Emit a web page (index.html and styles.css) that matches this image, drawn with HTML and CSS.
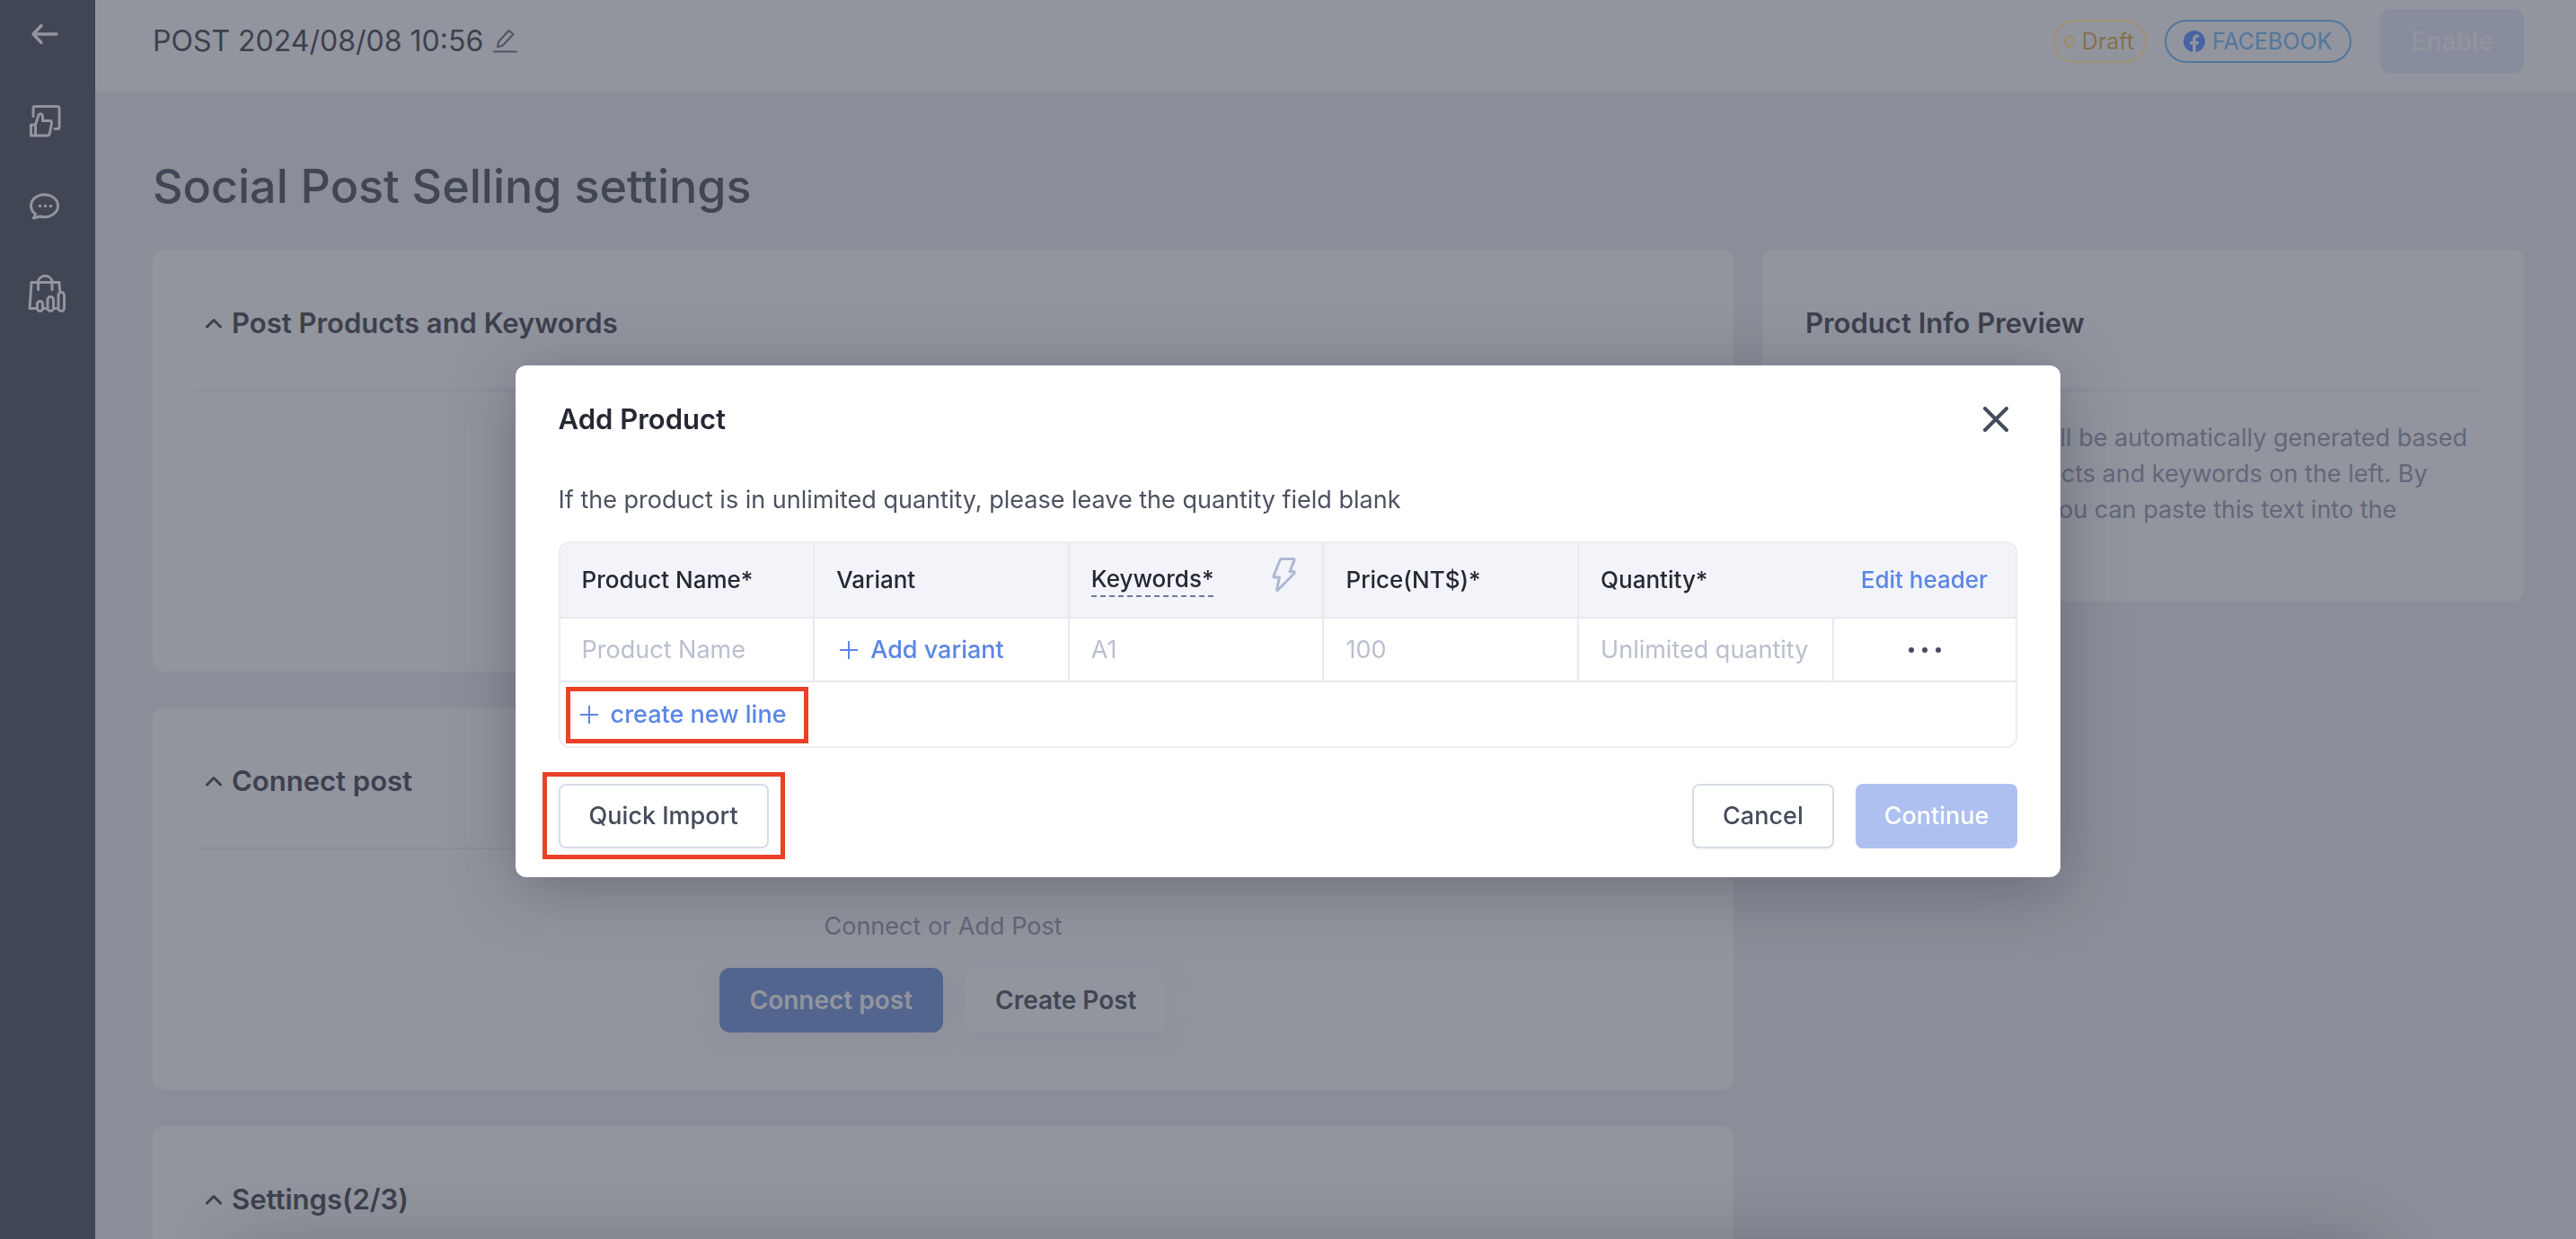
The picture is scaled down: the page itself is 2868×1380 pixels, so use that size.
FILE: index.html
```html
<!DOCTYPE html>
<html lang="en">
<head>
<meta charset="utf-8">
<title>Social Post Selling settings</title>
<link rel="stylesheet" href="styles.css">
</head>
<body>
<div class="app">
  <nav class="sidebar" aria-label="Main">
    <a href="#back" class="nav-item" aria-label="Back">
      <svg width="48" height="48" viewBox="0 0 48 48"><path d="M37 24H11M20 14.500L11 24l9 9.500" stroke-width="3.500"/></svg>
    </a>
    <a href="#posts" class="nav-item" aria-label="Posts">
      <svg width="48" height="48" viewBox="0 0 48 48"><path d="M11 19.500V10.500q0-2 2-2h25q2 0 2 2v21q0 2-2 2h-3M8.500 29h5v12h-5zM13.500 29l3-9.500q.500-3 3-2.500 2 .500 2 3.500v4H29q3 0 2.500 2.500l-2 11q-.500 3-3 3h-13"/></svg>
    </a>
    <a href="#messages" class="nav-item" aria-label="Messages">
      <svg width="48" height="48" viewBox="0 0 48 48"><path d="M13.500 32.500A15 12.500 0 1 1 18.500 35L11.500 37z"/><g class="solid"><circle cx="18.500" cy="23.500" r="1.800"/><circle cx="24.500" cy="23.500" r="1.800"/><circle cx="30.500" cy="23.500" r="1.800"/></g></svg>
    </a>
    <a href="#shop" class="nav-item" aria-label="Shop">
      <svg width="48" height="48" viewBox="0 0 48 48"><g stroke-width="3"><path d="M16.500 20.500V11a8 7.500 0 0 1 15.500 0v9.500M15 41.500H7L9 12.500h31l.500 9M22 41.500h4.500M34 41.500h4.500"/><rect x="15.500" y="33.500" width="6" height="11" rx="3"/><rect x="27" y="28.500" width="6.500" height="16" rx="3.200"/><rect x="39" y="23.500" width="6.500" height="21" rx="3.200"/></g></svg>
    </a>
  </nav>
  <div class="page">
    <header class="topbar">
      <div class="post-name">
        <span>POST 2024/08/08 10:56</span>
        <button class="icon-button" type="button" aria-label="Rename post">
          <svg width="28" height="28" viewBox="0 0 28 28"><path d="M2 25.500h25M6 20.500l1-6L18.500 2l5 4L12 18.500z" /></svg>
        </button>
      </div>
      <div class="status">
        <span class="tag tag-draft"><i class="ring"></i>Draft</span>
        <span class="tag tag-facebook">
          <svg width="24" height="24" viewBox="0 0 24 24"><circle cx="12" cy="12" r="12" fill="#4763a3"/><path d="M10.300 24v-8.500H7.200V12h3.100V9.300c0-3.100 1.800-4.800 4.600-4.800 1.300 0 2.300.200 2.300.200v3h-1.500c-1.500 0-2 .900-2 1.900V12h3.400l-.500 3.500h-2.900V24z" fill="#92959e"/></svg>
          FACEBOOK
        </span>
        <button class="button button-enable" type="button" disabled>Enable</button>
      </div>
    </header>
    <main class="content">
      <h1>Social Post Selling settings</h1>
      <div class="columns">
        <div class="column-main">
          <section class="card card-products">
            <h2><svg width="20" height="12" viewBox="0 0 20 12"><path d="M2.500 10l7.500-7.500 7.500 7.500"/></svg>Post Products and Keywords</h2>
          </section>
          <section class="card card-connect">
            <h2><svg width="20" height="12" viewBox="0 0 20 12"><path d="M2.500 10l7.500-7.500 7.500 7.500"/></svg>Connect post</h2>
            <div class="connect-body">
              <p>Connect or Add Post</p>
              <div class="connect-actions">
                <button class="button button-connect" type="button">Connect post</button>
                <button class="button button-create" type="button">Create Post</button>
              </div>
            </div>
          </section>
          <section class="card card-settings">
            <h2><svg width="20" height="12" viewBox="0 0 20 12"><path d="M2.500 10l7.500-7.500 7.500 7.500"/></svg>Settings(2/3)</h2>
          </section>
        </div>
        <aside class="card card-preview">
          <h2>Product Info Preview</h2>
          <p>The product details will be automatically generated based on the imported products and keywords on the left. By copying the full text, you can paste this text into the comments.</p>
        </aside>
      </div>
    </main>
  </div>
</div>

<div class="overlay">
  <div class="modal" role="dialog" aria-labelledby="modal-title">
    <header class="modal-header">
      <h2 id="modal-title">Add Product</h2>
      <button class="icon-button close" type="button" aria-label="Close">
        <svg width="28" height="28" viewBox="0 0 28 28"><path d="M2 2l24 24M26 2L2 26"/></svg>
      </button>
    </header>
    <p class="hint">If the product is in unlimited quantity, please leave the quantity field blank</p>
    <div class="table-box">
      <table>
        <colgroup><col class="col"><col class="col"><col class="col"><col class="col"><col class="col"><col></colgroup>
        <thead>
          <tr>
            <th>Product Name*</th>
            <th>Variant</th>
            <th>
              <div class="keywords">
                <span class="dashed">Keywords*</span>
                <button class="icon-button bolt" type="button" aria-label="Generate keywords">
                  <svg width="28" height="40" viewBox="0 0 28 40"><path d="M10.500 2.500H24q1.500 0 1 1.500l-5 12.500h4q2 .500 1 2L7 37q-1.500 1.500-1.500-.500L8.500 23H3q-1.500 0-1-1.500L9 4q.500-1.500 1.500-1.500z"/></svg>
                </button>
              </div>
            </th>
            <th>Price(NT$)*</th>
            <th class="open">Quantity*</th>
            <th class="edit"><a href="#edit">Edit header</a></th>
          </tr>
        </thead>
        <tbody>
          <tr>
            <td><input type="text" placeholder="Product Name" aria-label="Product Name"></td>
            <td><button class="link-button" type="button"><svg width="20" height="20" viewBox="0 0 20 20"><path d="M10 0v20M0 10h20"/></svg>Add variant</button></td>
            <td><input type="text" placeholder="A1" aria-label="Keywords"></td>
            <td><input type="text" placeholder="100" aria-label="Price"></td>
            <td class="quantity"><input type="text" placeholder="Unlimited quantity" aria-label="Quantity"></td>
            <td>
              <button class="icon-button more" type="button" aria-label="More">
                <svg class="dots" width="38" height="8" viewBox="0 0 38 8"><circle cx="4" cy="4" r="3"/><circle cx="19" cy="4" r="3"/><circle cx="34" cy="4" r="3"/></svg>
              </button>
            </td>
          </tr>
        </tbody>
      </table>
      <div class="add-row">
        <div class="marked marked-line">
          <button class="link-button" type="button"><svg width="20" height="20" viewBox="0 0 20 20"><path d="M10 0v20M0 10h20"/></svg>create new line</button>
        </div>
      </div>
    </div>
    <footer class="modal-footer">
      <div class="marked marked-import">
        <button class="button button-outline" type="button">Quick Import</button>
      </div>
      <div class="footer-right">
        <button class="button button-outline" type="button">Cancel</button>
        <button class="button button-continue" type="button" disabled>Continue</button>
      </div>
    </footer>
  </div>
</div>
</body>
</html>
```
FILE: styles.css
```css
* {
  box-sizing: border-box;
}

body,
h1,
h2,
p {
  margin: 0;
}

body {
  font-family: Inter, "Liberation Sans", sans-serif;
  font-size: 27px;
  line-height: 40px;
  color: #414654;
  background: #8b8d98;
}

svg {
  display: block;
  flex: none;
  fill: none;
  stroke: currentColor;
  stroke-width: 2;
  stroke-linecap: round;
  stroke-linejoin: round;
}

svg .solid {
  fill: currentColor;
  stroke: none;
}

button {
  font: inherit;
  cursor: pointer;
}

.icon-button {
  padding: 0;
  border: 0;
  background: none;
  color: inherit;
}

.button {
  height: 72px;
  padding: 0 32px;
  border: 0;
  border-radius: 12px;
  font-weight: 500;
}

/* Page */

.app {
  display: flex;
  height: 100vh;
  overflow: hidden;
}

.sidebar {
  flex: none;
  width: 106px;
  padding: 14px 26px;
  display: flex;
  flex-direction: column;
  gap: 48px;
  background: #414654;
  color: #92959e;
}

.nav-item {
  color: inherit;
}

.nav-item svg {
  stroke-width: 3;
}

.page {
  flex: 1;
  min-width: 0;
}

.topbar {
  display: flex;
  align-items: center;
  justify-content: space-between;
  height: 102px;
  padding: 0 58px 10px 64px;
  background: #92959e;
}

.post-name {
  display: flex;
  align-items: center;
  gap: 10px;
  font-size: 32px;
  color: #3e404d;
}

.post-name .icon-button {
  color: #4f5564;
}

.status {
  display: flex;
  align-items: center;
  font-size: 25px;
}

.tag {
  display: flex;
  align-items: center;
  gap: 8px;
  height: 48px;
  border: 2px solid;
  border-radius: 24px;
  line-height: 44px;
}

.tag svg {
  stroke: none;
}

.tag-draft {
  padding: 0 12px 0 10px;
  margin-right: 20px;
  border-color: #a09070;
  color: #85714f;
}

.ring {
  width: 12px;
  height: 14px;
  border: 2px solid #a08c64;
  border-radius: 50%;
}

.tag-facebook {
  padding: 0 20px 0 19px;
  margin-right: 32px;
  border-color: #53779c;
  color: #53779c;
}

.button-enable {
  padding: 0 34px;
  background: #888d9d;
  color: #92959e;
  font-size: 28px;
  font-weight: 600;
}

.content {
  padding: 76px 58px 0 64px;
}

h1 {
  font-size: 52px;
  line-height: 60px;
  font-weight: 500;
  margin-bottom: 40px;
}

.columns {
  display: flex;
  align-items: flex-start;
  gap: 32px;
}

.column-main {
  flex: none;
  width: 66.667%;
  display: flex;
  flex-direction: column;
  gap: 40px;
}

.card {
  padding: 0 48px;
  border-radius: 12px;
  background: #92959e;
}

.card h2 {
  display: flex;
  align-items: center;
  gap: 10px;
  height: 158px;
  padding: 8px 10px 0;
  border-bottom: 2px solid #8b8d9a;
  font-size: 31px;
  font-weight: 600;
  color: #3e404d;
}

.card h2 svg {
  stroke-width: 3;
}

.card-products {
  min-height: 470px;
}

.card-connect {
  min-height: 426px;
}

.card-settings {
  min-height: 426px;
}

.connect-body {
  display: flex;
  flex-direction: column;
  align-items: center;
  gap: 26px;
  padding-top: 66px;
  color: #636779;
}

.connect-actions {
  display: flex;
  gap: 24px;
}

.connect-actions .button {
  padding: 0 34px;
  font-size: 28px;
  font-weight: 600;
  box-shadow: 0 2px 24px #8b8d9a;
}

.button-connect {
  background: #52658f;
  color: #92959e;
}

.button-create {
  background: #92959e;
  color: #414654;
}

.card-preview {
  flex: 1;
  min-width: 0;
  min-height: 392px;
}

.card-preview h2 {
  padding: 8px 0 0;
}

.card-preview p {
  padding-top: 32px;
  color: #636779;
}

/* Dialog */

.overlay {
  position: fixed;
  inset: 0;
  display: grid;
  place-items: center;
  padding-top: 4px;
  overflow: hidden;
}

.overlay::after {
  content: "";
  position: absolute;
  top: 100%;
  left: 9%;
  right: 8%;
  height: 200px;
  box-shadow: 0 8px 72px rgba(40, 44, 56, 0.3);
}

.modal {
  width: 60%;
  padding: 32px 48px;
  border-radius: 12px;
  background: #fff;
  box-shadow: 0 12px 72px rgba(40, 44, 56, 0.36);
}

.modal-header {
  display: flex;
  align-items: center;
  justify-content: space-between;
  height: 56px;
  padding-right: 10px;
}

.modal-header h2 {
  font-size: 31px;
  font-weight: 600;
  color: #262833;
}

.close {
  color: #454b5a;
}

.close svg {
  stroke-width: 4;
}

.hint {
  margin: 42px 0 26px;
  color: #4d5261;
}

.table-box {
  border: 2px solid #eceef3;
  border-radius: 12px;
}

table {
  width: 100%;
  table-layout: fixed;
  border-collapse: separate;
  border-spacing: 0;
}

.col {
  width: 17.5%;
}

th,
td {
  padding: 0 24px;
  border-right: 2px solid #e7e9ef;
  border-bottom: 2px solid #e7e9ef;
  text-align: left;
}

th {
  height: 84px;
  background: #f3f4f9;
  font-size: 26px;
  font-weight: 500;
  color: #262833;
}

th:first-child {
  border-top-left-radius: 10px;
}

th:last-child {
  border-top-right-radius: 10px;
}

th.open {
  border-right-color: #f3f4f9;
}

th:last-child,
td:last-child {
  border-right: 0;
}

th.edit {
  padding: 0 0 0 30px;
}

.edit a {
  color: #5b86e5;
  text-decoration: none;
}

.keywords {
  display: flex;
  align-items: center;
  justify-content: space-between;
  padding-right: 4px;
}

.dashed {
  line-height: 36px;
  border-bottom: 2px dashed #717a95;
}

.bolt {
  margin-bottom: 12px;
  color: #adb9d3;
}

.bolt svg {
  stroke-width: 3;
}

td {
  height: 71px;
}

td.quantity {
  padding-right: 12px;
}

td input {
  display: block;
  width: 100%;
  padding: 0;
  border: 0;
  outline: 0;
  background: none;
  font: inherit;
}

td input::placeholder {
  color: #b9bfcd;
  opacity: 1;
}

.link-button {
  display: flex;
  align-items: center;
  gap: 14px;
  padding: 0 4px;
  border: 0;
  background: none;
  color: #5b86e5;
  font-weight: 500;
}

.more {
  display: block;
  margin: 0 auto;
}

.dots {
  fill: #454b5a;
  stroke: none;
}

.add-row {
  display: flex;
  align-items: center;
  height: 71px;
  padding: 0 18px;
}

/* Red call-outs around the two highlighted actions */

.marked {
  position: relative;
}

.marked::after {
  content: "";
  position: absolute;
  border: 5px solid #ea4126;
  pointer-events: none;
}

.marked-line::after {
  inset: -11px -20px -12px -12px;
}

.marked-import::after {
  inset: -13px -18px -12px -18px;
}

.modal-footer {
  display: flex;
  justify-content: space-between;
  margin-top: 40px;
}

.footer-right {
  display: flex;
  gap: 24px;
}

.modal-footer .button {
  border-radius: 8px;
}

.button-outline {
  border: 2px solid #d5dce4;
  background: #fff;
  color: #454b5a;
  box-shadow: 0 3px 0 #fafafb;
}

.modal-footer .button-continue {
  background: #adc0ef;
  color: #fff;
}
```
